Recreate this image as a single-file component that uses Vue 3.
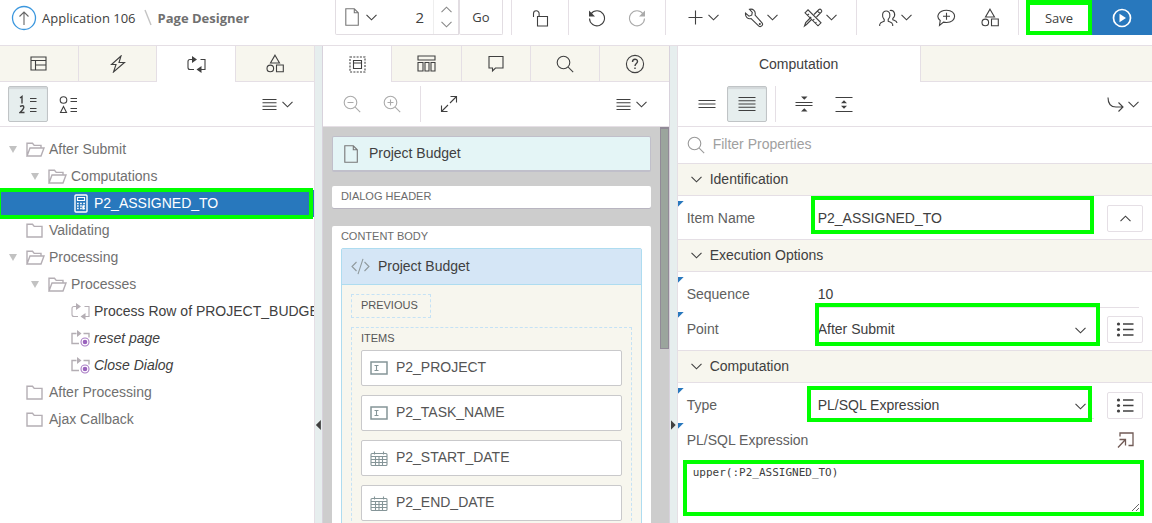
<script setup>
import { h, ref } from 'vue'

// Each icon: [width, height, markup]
const icons = {
  up: [26, 26, '<circle cx="13" cy="13" r="11.5" stroke="#3b97de" stroke-width="1.3"/><path d="M13 7v13M8.5 11.5L13 7l4.500 4.500" stroke="#666"/>'],
  slash: [8, 18, '<path d="M1 1l6 15" stroke="#c4c4c4" stroke-width="1.4"/>'],
  page: [14, 18, '<path d="M.8.8h8.500l4 4v12.400H.8zM9.300.8v4h4" stroke="#777"/>'],
  down: [11, 7, '<path d="M.5.8l5 5 5-5"/>'],
  upChevron: [11, 7, '<path d="M.5 6.200l5-5 5 5"/>'],
  lock: [17, 18, '<path d="M5.500 7.500h10v9.500h-10zM1.500 8V4.500a2.800 2.800 0 0 1 5.600 0V7.500"/>'],
  undo: [18, 18, '<path d="M3 4.800A7.500 7.500 0 1 1 1.500 9.500"/><path d="M1 1.500v6h6z" fill="currentColor" stroke="none"/>'],
  redo: [18, 18, '<path d="M15 4.800A7.500 7.500 0 1 0 16.500 9.500"/><path d="M17 1.500v6h-6z" fill="currentColor" stroke="none"/>'],
  plus: [15, 15, '<path d="M.5 7.500h14M7.500.5v14"/>'],
  wrench: [20, 20, '<path d="M5.500 1.300c3.500-.9 6.500 1.600 5.600 5.700l6.900 7.800c1.800 2.400-1.300 5-3.400 3l-7.500-7.200C4 11.500 1 9 1.500 5.200L5 8.200l2.700-1 .6-2.900z"/><circle cx="15.800" cy="16" r=".5"/>'],
  tools: [20, 20, '<path d="M2 4.800L5 1.800l13 13-3 3zM4.500 7.300l1.500-1.500M7.200 10l1-1M9.800 12.600l1.500-1.500M12.400 15.200l1-1M11 6.500l5-5c1.500-1 3.500 1 2.500 2.500l-5 5M9 11l-5.500 5.500-2 1.500 1.200-3.500 5-5M14.500 3l2.500 2.500"/>'],
  users: [19, 18, '<path d="M.7 17v-1.500c.5-2.500 3-2.500 4.500-3.300v-1.700C2.500 8 3 2 7.200 2s4.800 6 2 8.500v1.700c1.500.8 4 .8 4.500 3.300V17M10.800 1.500c4.800-1 6.500 5 3 8v1.300c1.500.8 4 .8 4.200 3.200"/>'],
  comment: [19, 18, '<path d="M9.500 1.200c10.800 0 10.800 12.300 0 12.300-1.500 0-2-.1-3-.4L2.500 16.500l.7-5C-1.500 8 1.500 1.200 9.500 1.200zM6 7.300h7M9.500 3.800v7"/>'],
  shapes: [18, 19, '<path d="M9 1.200L13.500 9h-9zM10.500 11h6.800v6.800h-6.800z"/><circle cx="4.300" cy="14.400" r="3.300"/>'],
  run: [20, 20, '<circle cx="10" cy="10" r="8.500" stroke-width="1.700"/><path d="M7.500 5.700v8.600l6.500-4.300z" fill="currentColor" stroke="none"/>'],
  layout: [17, 15, '<path d="M1 1h15v13H1zM1 4.500h15M5.500 4.500V14M5.500 9H16"/>'],
  bolt: [16, 18, '<path d="M11 1L1.500 9.500H6L3.500 17l11-9.500H9z"/>'],
  process: [19, 17, '<path d="M5.500 3.500H3Q1 3.500 1 5.500v6q0 2 2 2h4M13.500 3.500H18v10h-4.500"/><path d="M5 0l5 3.500L5 7zM14.500 10l-5 3.500 5 3.500z" fill="currentColor" stroke="none"/>'],
  processOnce: [19, 17, '<path d="M5.500 3.500H1v10h7M12.500 3.500H18v4" stroke-width="1.400"/><path d="M6 0l4.500 3.500L6 7z" fill="currentColor" stroke="none"/><circle cx="14" cy="12" r="4" stroke="#a87bc4" fill="#fff"/><circle cx="14" cy="12" r="2.300" fill="#9a62bd" stroke="none"/>'],
  numbered: [18, 19, '<path d="M1 3l2-1.500V8.500M1 11.500q3.800-1.800 3.800.8Q4.800 14 1 17.500h4.500" stroke-width="1.400"/><path d="M11 3.500h6.500M11 6.500h6.500M11 13.500h6.500M11 16.500h6.500"/>'],
  typed: [18, 19, '<circle cx="4.500" cy="5" r="3.300"/><path d="M4.500 11.500l3 6h-6zM11.500 3.500H18M11.500 6.500H18M11.500 13.500H18M11.500 16.500H18"/>'],
  menu: [15, 13, '<path d="M.5 1.500h14M.5 4.800h14M.5 8.200h14M.5 11.500h14"/>'],
  canvas: [17, 17, '<path d="M1 1h15v15H1z" stroke-dasharray="2 1.300"/><path d="M4.500 4.500h8v8h-8zM4.500 7h8"/>'],
  columns: [19, 17, '<path d="M1 1h17v4H1zM1 7.500h5V16H1zM8 7.500h4V16H8zM14 7.500h4V16h-4z"/>'],
  speech: [16, 18, '<path d="M1 1.500h14v11.500H7.500L4.500 16v-3H1z"/>'],
  search: [18, 18, '<circle cx="7.500" cy="7.500" r="6.300"/><path d="M12.200 12.200l5 5"/>'],
  help: [20, 20, '<circle cx="10" cy="10" r="8.600"/><path d="M7.500 8c0-3.800 5-3.500 5-.5 0 2-2.500 2-2.500 4.500M10 13.500v1.500" stroke-width="1.400"/>'],
  zoomOut: [18, 18, '<circle cx="7.500" cy="7.500" r="6.300"/><path d="M12.200 12.200l5 5M4.500 7.500h6"/>'],
  zoomIn: [18, 18, '<circle cx="7.500" cy="7.500" r="6.300"/><path d="M12.200 12.200l5 5M4.500 7.500h6M7.500 4.500v6"/>'],
  expand: [18, 18, '<path d="M10 8l6.500-6.500M10.500 1.500h6v6M8 10l-6.500 6.500M1.500 10.500v6h6"/>'],
  lines: [18, 10, '<path d="M.5 1.500h17M.5 5h17M.5 8.500h17"/>'],
  denseLines: [18, 16, '<path d="M.5 1.500h17M.5 4.700h17M.5 8h17M.5 11.200h17M.5 14.500h17"/>'],
  collapse: [18, 16, '<path d="M.5 6.500h17M.5 9.500h17"/><path d="M6 .5h6.500l-3.200 3.300zM6 15.500h6.500l-3.200-3.300z" fill="currentColor" stroke="none"/>'],
  stretch: [18, 17, '<path d="M.5 1.500h17M.5 15.500h17"/><path d="M6 7.300h6L9 4.200zM6 9.700h6l-3 3.100z" fill="currentColor" stroke="none"/>'],
  goTo: [18, 15, '<path d="M1 .5c0 6 3 9.500 8 9.500h7M11.500 5.500L16 10l-4.500 4.500"/>'],
  folder: [17, 15, '<path d="M1 1.200h5.500l1.700 2.200H16V14H1z" stroke-width="1.400"/>'],
  folderOpen: [19, 15, '<path d="M1 14V1.200h5.500l1.700 2.200H15V6M1 14L4 6h14l-3 8z" stroke-width="1.400"/>'],
  calculator: [14, 19, '<rect x="1" y="1" width="12" height="17" rx="1" stroke-width="1.400"/><path d="M3.500 3.500h7v3h-7z"/><path d="M3 9.500h8M3 12h8M3 14.500h8" stroke-width="1.700" stroke-dasharray="1.700 1.400"/><path d="M9.300 11.500v4" stroke-width="2"/>'],
  code: [19, 17, '<path d="M5.500 4L1 8.500 5.500 13M13.500 4L18 8.500 13.500 13M12 .8L7 16.200"/>'],
  text: [18, 14, '<path d="M1 1h16v12H1z" stroke-width="1.500"/><path d="M4.500 4.500h4M4.500 9.500h4M6.500 4.500v5"/>'],
  calendar: [18, 15, '<rect x="1" y="2.500" width="16" height="12" rx="1"/><path d="M1 5.500h16M1 8.500h16M1 11.500h16M5.500 5.500v9M9 5.500v9M12.500 5.500v9M4.500.5v3M13.500.5v3"/>'],
  list: [18, 15, '<path d="M7 2h10.500M7 7.500h10.500M7 13h10.500" stroke-width="1.300"/><g fill="currentColor" stroke="none"><circle cx="2.500" cy="2" r="1.600"/><circle cx="2.500" cy="7.500" r="1.600"/><circle cx="2.500" cy="13" r="1.600"/></g>'],
  popOut: [17, 17, '<path d="M3 4.500V1h13v12.500h-4.500M2.500 7.500h6v6M8.500 7.500L1 15.500" stroke-width="1.300"/>'],
}

const Icon = ({ name }) => {
  const [width, height, innerHTML] = icons[name]
  return h('svg', {
    width, height, viewBox: `0 0 ${width} ${height}`, fill: 'none',
    stroke: 'currentColor', 'stroke-width': 1.1, 'aria-hidden': 'true', innerHTML,
  })
}
Icon.props = ['name']

const leftTabs = [
  ['layout', 'Rendering'], ['bolt', 'Dynamic Actions'], ['process', 'Processing'], ['shapes', 'Shared Components'],
]
const centerTabs = [
  ['canvas', 'Layout'], ['columns', 'Component View'], ['speech', 'Messages'], ['search', 'Page Search'], ['help', 'Help'],
]
const tree = [
  { label: 'After Submit', level: 0, icon: 'folderOpen', open: true },
  { label: 'Computations', level: 1, icon: 'folderOpen', open: true },
  { label: 'P2_ASSIGNED_TO', level: 2, icon: 'calculator', selected: true },
  { label: 'Validating', level: 0, icon: 'folder' },
  { label: 'Processing', level: 0, icon: 'folderOpen', open: true },
  { label: 'Processes', level: 1, icon: 'folderOpen', open: true },
  { label: 'Process Row of PROJECT_BUDGE', level: 2, icon: 'process', leaf: true },
  { label: 'reset page', level: 2, icon: 'processOnce', leaf: true, italic: true },
  { label: 'Close Dialog', level: 2, icon: 'processOnce', leaf: true, italic: true },
  { label: 'After Processing', level: 0, icon: 'folder' },
  { label: 'Ajax Callback', level: 0, icon: 'folder' },
]
const items = [
  ['text', 'P2_PROJECT'], ['text', 'P2_TASK_NAME'], ['calendar', 'P2_START_DATE'], ['calendar', 'P2_END_DATE'],
]

const pageNumber = ref('2')
const filter = ref('')
const itemName = ref('P2_ASSIGNED_TO')
const sequence = ref('10')
const point = ref('After Submit')
const type = ref('PL/SQL Expression')
const expression = ref('upper(:P2_ASSIGNED_TO)')
</script>

<template>
  <div class="designer">
    <header class="topbar">
      <nav class="crumbs">
        <a href="#" aria-label="Up"><Icon name="up" /></a>
        <a href="#" class="crumb">Application 106</a>
        <Icon name="slash" />
        <strong>Page Designer</strong>
      </nav>
      <div class="finder">
        <button class="plain pair" aria-label="Page finder"><Icon name="page" /><Icon name="down" /></button>
        <input v-model="pageNumber" class="page-number" aria-label="Page number">
        <div class="stepper">
          <button class="plain" aria-label="Next page"><Icon name="upChevron" /></button>
          <button class="plain" aria-label="Previous page"><Icon name="down" /></button>
        </div>
      </div>
      <button class="go">Go</button>
      <div class="group lock-group"><button class="plain" aria-label="Lock"><Icon name="lock" /></button></div>
      <div class="group history">
        <button class="plain" aria-label="Undo"><Icon name="undo" /></button>
        <button class="plain faded" aria-label="Redo"><Icon name="redo" /></button>
      </div>
      <div class="group menus">
        <button class="plain pair medium" aria-label="Create"><Icon name="plus" /><Icon name="down" /></button>
        <button class="plain pair tight" aria-label="Utilities"><Icon name="wrench" /><Icon name="down" /></button>
        <button class="plain pair tight" aria-label="Settings"><Icon name="tools" /><Icon name="down" /></button>
      </div>
      <div class="group menus">
        <button class="plain pair tight" aria-label="Team"><Icon name="users" /><Icon name="down" /></button>
        <button class="plain" aria-label="Comments"><Icon name="comment" /></button>
        <button class="plain" aria-label="Shared components"><Icon name="shapes" /></button>
      </div>
      <div class="group save-group"><button class="save">Save</button></div>
      <button class="run" aria-label="Save and run"><Icon name="run" /></button>
    </header>

    <main class="workspace">
      <section class="panel left">
        <div class="tabs">
          <button v-for="([icon, label], i) in leftTabs" :key="label" class="tab" :class="{ active: i === 2 }" :aria-label="label"><Icon :name="icon" /></button>
        </div>
        <div class="tools">
          <button class="tool pressed" aria-label="Order by sequence"><Icon name="numbered" /></button>
          <button class="tool" aria-label="Group by type"><Icon name="typed" /></button>
          <button class="plain pair medium end" aria-label="Menu"><Icon name="menu" /><Icon name="down" /></button>
        </div>
        <ul class="tree">
          <li v-for="node in tree" :key="node.label" :class="['level-' + node.level, { selected: node.selected, leaf: node.leaf, italic: node.italic }]">
            <span class="twist"><span v-if="node.open" class="arrow"></span></span>
            <span class="node-icon"><Icon :name="node.icon" /></span>
            <span class="label">{{ node.label }}</span>
          </li>
        </ul>
      </section>

      <div class="splitter"><span class="handle to-left"></span></div>

      <section class="panel center">
        <div class="tabs">
          <button v-for="([icon, label], i) in centerTabs" :key="label" class="tab" :class="{ active: i === 0 }" :aria-label="label"><Icon :name="icon" /></button>
        </div>
        <div class="tools">
          <button class="tool faded" aria-label="Zoom out"><Icon name="zoomOut" /></button>
          <button class="tool faded" aria-label="Zoom in"><Icon name="zoomIn" /></button>
          <span class="rule"></span>
          <button class="tool" aria-label="Expand"><Icon name="expand" /></button>
          <button class="plain pair medium end" aria-label="Menu"><Icon name="menu" /><Icon name="down" /></button>
        </div>
        <div class="canvas">
          <div class="canvas-content">
            <div class="page-title"><Icon name="page" /><span class="label">Project Budget</span></div>
            <div class="block"><h3>DIALOG HEADER</h3></div>
            <div class="block content-body">
              <h3>CONTENT BODY</h3>
              <div class="region">
                <div class="region-title"><Icon name="code" /><span class="label">Project Budget</span></div>
                <div class="region-body">
                  <div class="slot previous"><h4>PREVIOUS</h4></div>
                  <div class="slot slot-items">
                    <h4>ITEMS</h4>
                    <div v-for="[icon, label] in items" :key="label" class="item"><Icon :name="icon" /><span class="label">{{ label }}</span></div>
                  </div>
                </div>
              </div>
            </div>
          </div>
          <div class="scrollbar"><div class="thumb"></div></div>
        </div>
      </section>

      <div class="splitter"><span class="handle to-right"></span></div>

      <section class="panel right">
        <div class="tabs">
          <button class="tab active named">Computation</button>
          <span class="tab-rest"></span>
        </div>
        <div class="tools">
          <button class="tool" aria-label="Show common"><Icon name="lines" /></button>
          <button class="tool pressed" aria-label="Show all"><Icon name="denseLines" /></button>
          <span class="rule"></span>
          <button class="tool" aria-label="Collapse all"><Icon name="collapse" /></button>
          <button class="tool" aria-label="Expand all"><Icon name="stretch" /></button>
          <button class="plain pair tight end" aria-label="Go to"><Icon name="goTo" /><Icon name="down" /></button>
        </div>
        <label class="filter">
          <Icon name="search" />
          <input v-model="filter" class="label" placeholder="Filter Properties" aria-label="Filter Properties">
        </label>

        <h2 class="section"><Icon name="down" /><span class="label">Identification</span></h2>
        <div class="props">
          <div class="prop">
            <label for="item-name" class="label">Item Name</label>
            <div class="field mark-name"><input id="item-name" v-model="itemName"></div>
            <button class="side" aria-label="Choose item"><Icon name="upChevron" /></button>
          </div>
        </div>

        <h2 class="section"><Icon name="down" /><span class="label">Execution Options</span></h2>
        <div class="props">
          <div class="prop">
            <label for="sequence" class="label">Sequence</label>
            <div class="field wide"><input id="sequence" v-model="sequence"></div>
          </div>
          <div class="prop">
            <label for="point" class="label">Point</label>
            <div class="field mark-point">
              <select id="point" v-model="point"><option>After Submit</option></select>
              <Icon name="down" />
            </div>
            <button class="side" aria-label="Point quick picks"><Icon name="list" /></button>
          </div>
        </div>

        <h2 class="section"><Icon name="down" /><span class="label">Computation</span></h2>
        <div class="props last">
          <div class="prop">
            <label for="type" class="label">Type</label>
            <div class="field mark-type">
              <select id="type" v-model="type"><option>PL/SQL Expression</option></select>
              <Icon name="down" />
            </div>
            <button class="side" aria-label="Type quick picks"><Icon name="list" /></button>
          </div>
          <div class="prop">
            <label for="expression" class="label long">PL/SQL Expression</label>
            <button class="side bare" aria-label="Open code editor"><Icon name="popOut" /></button>
          </div>
          <div class="code"><textarea id="expression" v-model="expression" spellcheck="false"></textarea></div>
        </div>
      </section>
    </main>
  </div>
</template>

<style>
body { background: #fff; }
</style>

<style scoped>
* { box-sizing: border-box; }
svg { flex: none; display: block; }
button, input, select, textarea { font: inherit; color: inherit; margin: 0; }
button { cursor: pointer; display: flex; align-items: center; justify-content: center; padding: 0; background: none; border: 0; }
h2, h3, h4, ul { margin: 0; padding: 0; font-weight: normal; }

.designer {
  height: 100vh; display: flex; flex-direction: column; overflow: hidden;
  font: 14px/20px "Liberation Sans", Arial, sans-serif; color: #404040; background: #fff;
}

.topbar {
  display: flex; flex: none; height: 46px; padding-bottom: 10px; border-bottom: 1px solid #e5dfe5;
  font: 13px/18px "Open Sans", sans-serif;
}
.crumbs { flex: 1; display: flex; align-items: center; padding-left: 11px; }
.crumbs a { color: #404040; text-decoration: none; }
.crumb { margin: 0 8px 0 5px; }
.crumbs strong { margin-left: 6px; color: #707070; }
.pair { gap: 7px; }
.pair.medium { gap: 5px; }
.pair.tight { gap: 3px; }
.faded { color: #aaa; }
.finder { display: flex; width: 124px; border: 1px solid #e2dde2; border-top: 0; border-radius: 0 0 0 2px; }
.finder .pair { width: 50px; }
.page-number { width: 48px; border: 0; border-right: 1px solid #eee; text-align: right; padding: 0 9px; font-size: 15px; background: none; }
.stepper { flex: 1; display: flex; flex-direction: column; justify-content: center; align-items: center; gap: 8px; color: #888; }
.go { width: 44px; margin-right: 8px; border: 1px solid #e2dde2; border-top: 0; border-radius: 0 0 2px 2px; }
.group { display: flex; align-items: center; border-left: 1px solid #e5dfe5; }
.lock-group { width: 57px; justify-content: center; }
.history { width: 97px; justify-content: center; gap: 22px; }
.menus { gap: 25px; padding: 0 19px 0 22px; }
.save-group { padding-left: 7px; align-items: stretch; }
.save { width: 66px; border: 4px solid #0f0; border-top-width: 5px; }
.run { width: 60px; background: #2878bd; color: #fff; }

.workspace { flex: 1; display: flex; min-height: 0; }
.panel { display: flex; flex-direction: column; min-width: 0; }
.left { flex: 315; border-right: 1px solid #e5dfe5; }
.center { flex: 347; border: solid #d8d2dc; border-width: 0 1px; }
.right { flex: 476; border-left: 1px solid #e5dfe5; }
.splitter { flex: none; width: 7px; background: #e6eeee; padding-top: 374px; }
.handle { display: block; width: 5px; height: 10px; margin: 0 auto; background: #404040; }
.to-left { clip-path: polygon(100% 0, 100% 100%, 0 50%); }
.to-right { clip-path: polygon(0 0, 100% 50%, 0 100%); }

.tabs { display: flex; flex: none; height: 36px; }
.tab { flex: 1; background: #f7f6ee; border: solid #e5dfe5; border-width: 0 0 1px 1px; }
.tab:first-child { border-left: 0; }
.tab.active { background: #fff; border-bottom: 0; }
.tab.named { flex: none; width: 51%; }
.tab-rest { flex: 1; background: #f7f6ee; border: solid #e5dfe5; border-width: 0 0 1px 1px; }
.tools { display: flex; flex: none; align-items: center; height: 45px; padding: 0 9px; border-bottom: 1px solid #e5dfe5; }
.left .tools { padding: 0 8px; }
.tool { width: 40px; height: 36px; border-radius: 2px; }
.tool.pressed { background: #e6eeee; border: 1px solid #c0c4c6; box-shadow: inset 0 2px 1px #d3d8da; }
.rule { width: 1px; height: 36px; margin: 0 8px; background: #e5dfe5; }
.end { margin-left: auto; margin-right: 13px; }
.right .end { margin-right: 4px; }

.label { padding-bottom: 2px; }
.tree { list-style: none; padding-top: 9px; overflow: hidden; flex: 1; }
.tree li { position: relative; display: flex; align-items: center; height: 27px; padding-left: 9px; color: #707070; white-space: nowrap; }
.tree .level-1 { padding-left: 31px; }
.tree .level-2 { padding-left: 54px; }
.tree .leaf { color: #404040; }
.tree .italic .label { font-style: italic; }
.twist { width: 17px; flex: none; }
.arrow { display: block; width: 8px; height: 7px; background: #c2c2c2; clip-path: polygon(0 0, 100% 0, 50% 100%); }
.node-icon { width: 23px; flex: none; color: #b4aeb4; }
.tree .selected { background: #2878bd; color: #fff; }
.selected .node-icon { color: #fff; padding-left: 3px; }
.tree .selected::after { content: ""; position: absolute; inset: -2px 1px -2px -3px; border: 4px solid #0f0; }

.canvas { flex: 1; min-height: 0; display: flex; background: #cdcdcd; }
.canvas-content { flex: 1; overflow: hidden; padding: 9px 9px 0; }
.scrollbar { width: 9px; }
.thumb { height: 56%; background: #9ba59d; border: 1px solid #918a97; border-top-width: 2px; }
.page-title { display: flex; align-items: center; gap: 11px; height: 36px; padding-left: 11px; background: #e4f5f6; border: 1px solid #c0bfca; border-bottom-width: 2px; border-radius: 2px; }
.block { margin-top: 14px; padding: 0 9px; background: #fff; border-radius: 2px; box-shadow: 0 1px #b8b5c0; }
.block h3 { padding-bottom: 2px; font-size: 11px; line-height: 20px; color: #6b6b6b; }
.block.content-body { margin-top: 18px; }
.region { border: 1px solid #aedcf0; border-radius: 2px; background: #f7f6ee; }
.region-title { display: flex; align-items: center; gap: 8px; height: 36px; padding-left: 9px; background: #d5e6f6; border-bottom: 1px solid #aedcf0; }
.region-title svg { color: #909a9d; }
.region-body { padding: 9px; }
.slot { border: 1px dashed #c5e2f5; padding: 0 9px; color: #555; }
.slot h4 { padding-bottom: 2px; font-size: 11px; line-height: 20px; }
.previous { width: 80px; margin-bottom: 9px; }
.item { display: flex; align-items: center; gap: 8px; height: 36px; margin-bottom: 9px; padding-left: 8px; color: #555; background: #fff; border: 1px solid #c9c9cb; border-radius: 2px; }
.item svg { color: #859598; }

.filter { display: flex; flex: none; align-items: center; gap: 8px; height: 37px; padding-left: 9px; border-bottom: 1px solid #e5dfe5; color: #999; }
.filter input { flex: 1; border: 0; padding: 0 0 2px; outline: 0; color: #404040; }
.filter input::placeholder { color: #a0a0a0; opacity: 1; }
.section { display: flex; flex: none; align-items: center; gap: 8px; height: 32px; padding-left: 13px; font-size: 14px; background: #f7f6ee; border-bottom: 1px solid #e5dfe5; }
.props { padding: 5px 0 3px; border-bottom: 1px solid #e5dfe5; }
.props.last { border: 0; }
.prop { position: relative; display: flex; align-items: center; height: 35px; padding: 0 9px; }
.prop::before { content: ""; position: absolute; left: 0; top: 0; width: 6px; height: 6px; background: #2878bd; clip-path: polygon(0 0, 100% 0, 0 100%); }
.prop label { flex: none; width: 131px; color: #606060; }
.prop label.long { width: auto; flex: 1; }
.field { position: relative; flex: 1; display: flex; align-items: center; height: 27px; margin-right: 13px; border-bottom: 1px solid #e5dfe5; }
.field.wide { margin-right: 4px; }
.field input, .field select { flex: 1; min-width: 0; width: 100%; padding: 0; border: 0; background: none; outline: 0; appearance: none; }
.field svg { position: absolute; right: 8px; top: 11px; }
.field::after { position: absolute; border: 4px solid #0f0; pointer-events: none; }
.mark-name::after { content: ""; inset: -9px 0 -3px -7px; }
.mark-point::after { content: ""; inset: -13px -6px -4px -3px; }
.mark-type::after { content: ""; inset: -6px 2px -4px -11px; }
.side { width: 36px; height: 27px; flex: none; border: 1px solid #e5dfe5; border-radius: 2px; }
.side.bare { border: 0; color: #705a55; }
.code { margin: 2px 8px 0 5px; border: 4px solid #0f0; }
.code textarea { display: block; width: 100%; height: 48px; padding: 2px 6px; border: 0; outline: 0; resize: vertical; font: 11px/13px "DejaVu Sans Mono", monospace; }
</style>
